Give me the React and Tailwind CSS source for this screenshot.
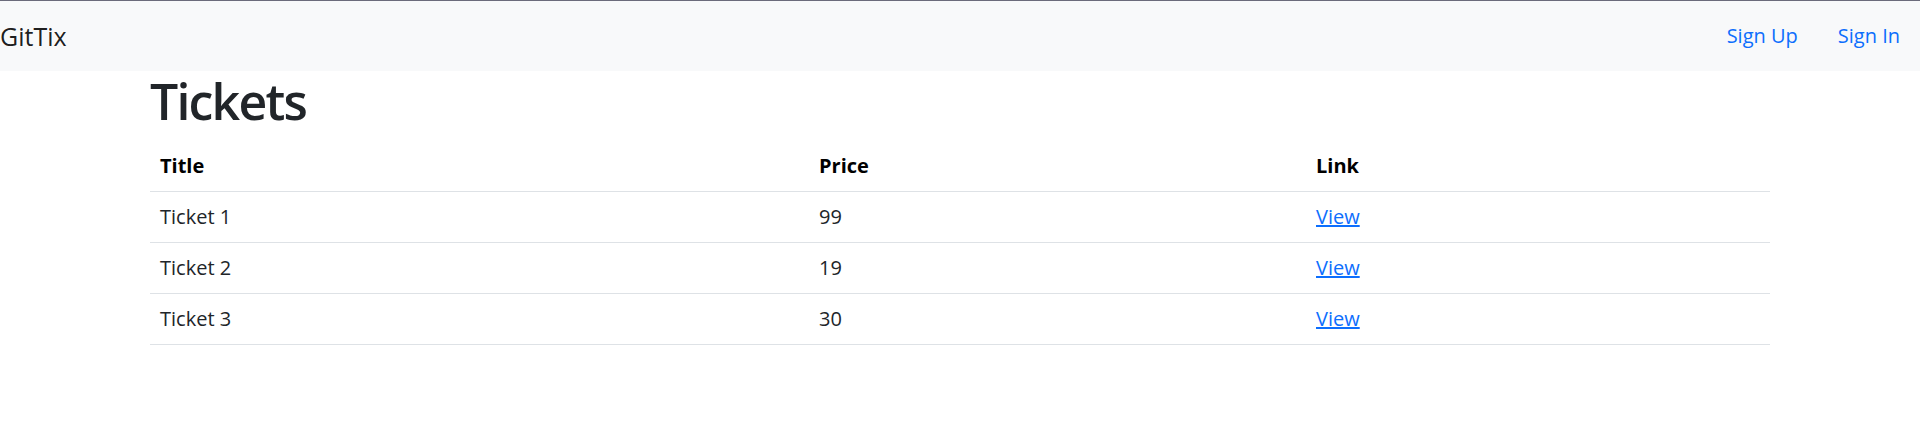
const TICKETS = [
  { id: 1, title: 'Ticket 1', price: 99 },
  { id: 2, title: 'Ticket 2', price: 19 },
  { id: 3, title: 'Ticket 3', price: 30 },
]

export default function App() {
  return (
    <div className="min-h-[422px] bg-white text-[#212529] font-['Open_Sans',sans-serif]">
      {/* Navbar */}
      <nav className="flex items-center justify-between h-[71px] border-t border-[#6b6b7b] bg-[#f8f9fa]">
        <a href="#" className="text-[25px] leading-[37px] text-black/90">GitTix</a>
        <div className="flex">
          <a href="#" className="px-5 py-[10px] text-[20px] leading-[30px] text-[#0d6efd]">Sign Up</a>
          <a href="#" className="px-5 py-[10px] text-[20px] leading-[30px] text-[#0d6efd]">Sign In</a>
        </div>
      </nav>

      {/* Content */}
      <div className="mx-auto w-[1650px] px-[15px]">
        <h1 className="mb-[10px] text-[50px] leading-[60px] font-semibold tracking-[-1.8px]">Tickets</h1>
        <table className="w-full table-fixed text-[20px] leading-[30px] border-collapse">
          <colgroup>
            <col className="w-[659px]" />
            <col className="w-[497px]" />
            <col />
          </colgroup>
          <thead>
            <tr className="border-b border-[#dee2e6]">
              <th className="px-[10px] py-[10px] text-left font-bold text-black">Title</th>
              <th className="px-[10px] py-[10px] text-left font-bold text-black">Price</th>
              <th className="px-[10px] py-[10px] text-left font-bold text-black">Link</th>
            </tr>
          </thead>
          <tbody>
            {TICKETS.map(t => (
              <tr key={t.id} className="border-b border-[#dee2e6]">
                <td className="px-[10px] py-[10px]">{t.title}</td>
                <td className="px-[10px] py-[10px]">{t.price}</td>
                <td className="px-[10px] py-[10px]">
                  <a href="#" className="text-[#0d6efd] underline">View</a>
                </td>
              </tr>
            ))}
          </tbody>
        </table>
      </div>
    </div>
  )
}
